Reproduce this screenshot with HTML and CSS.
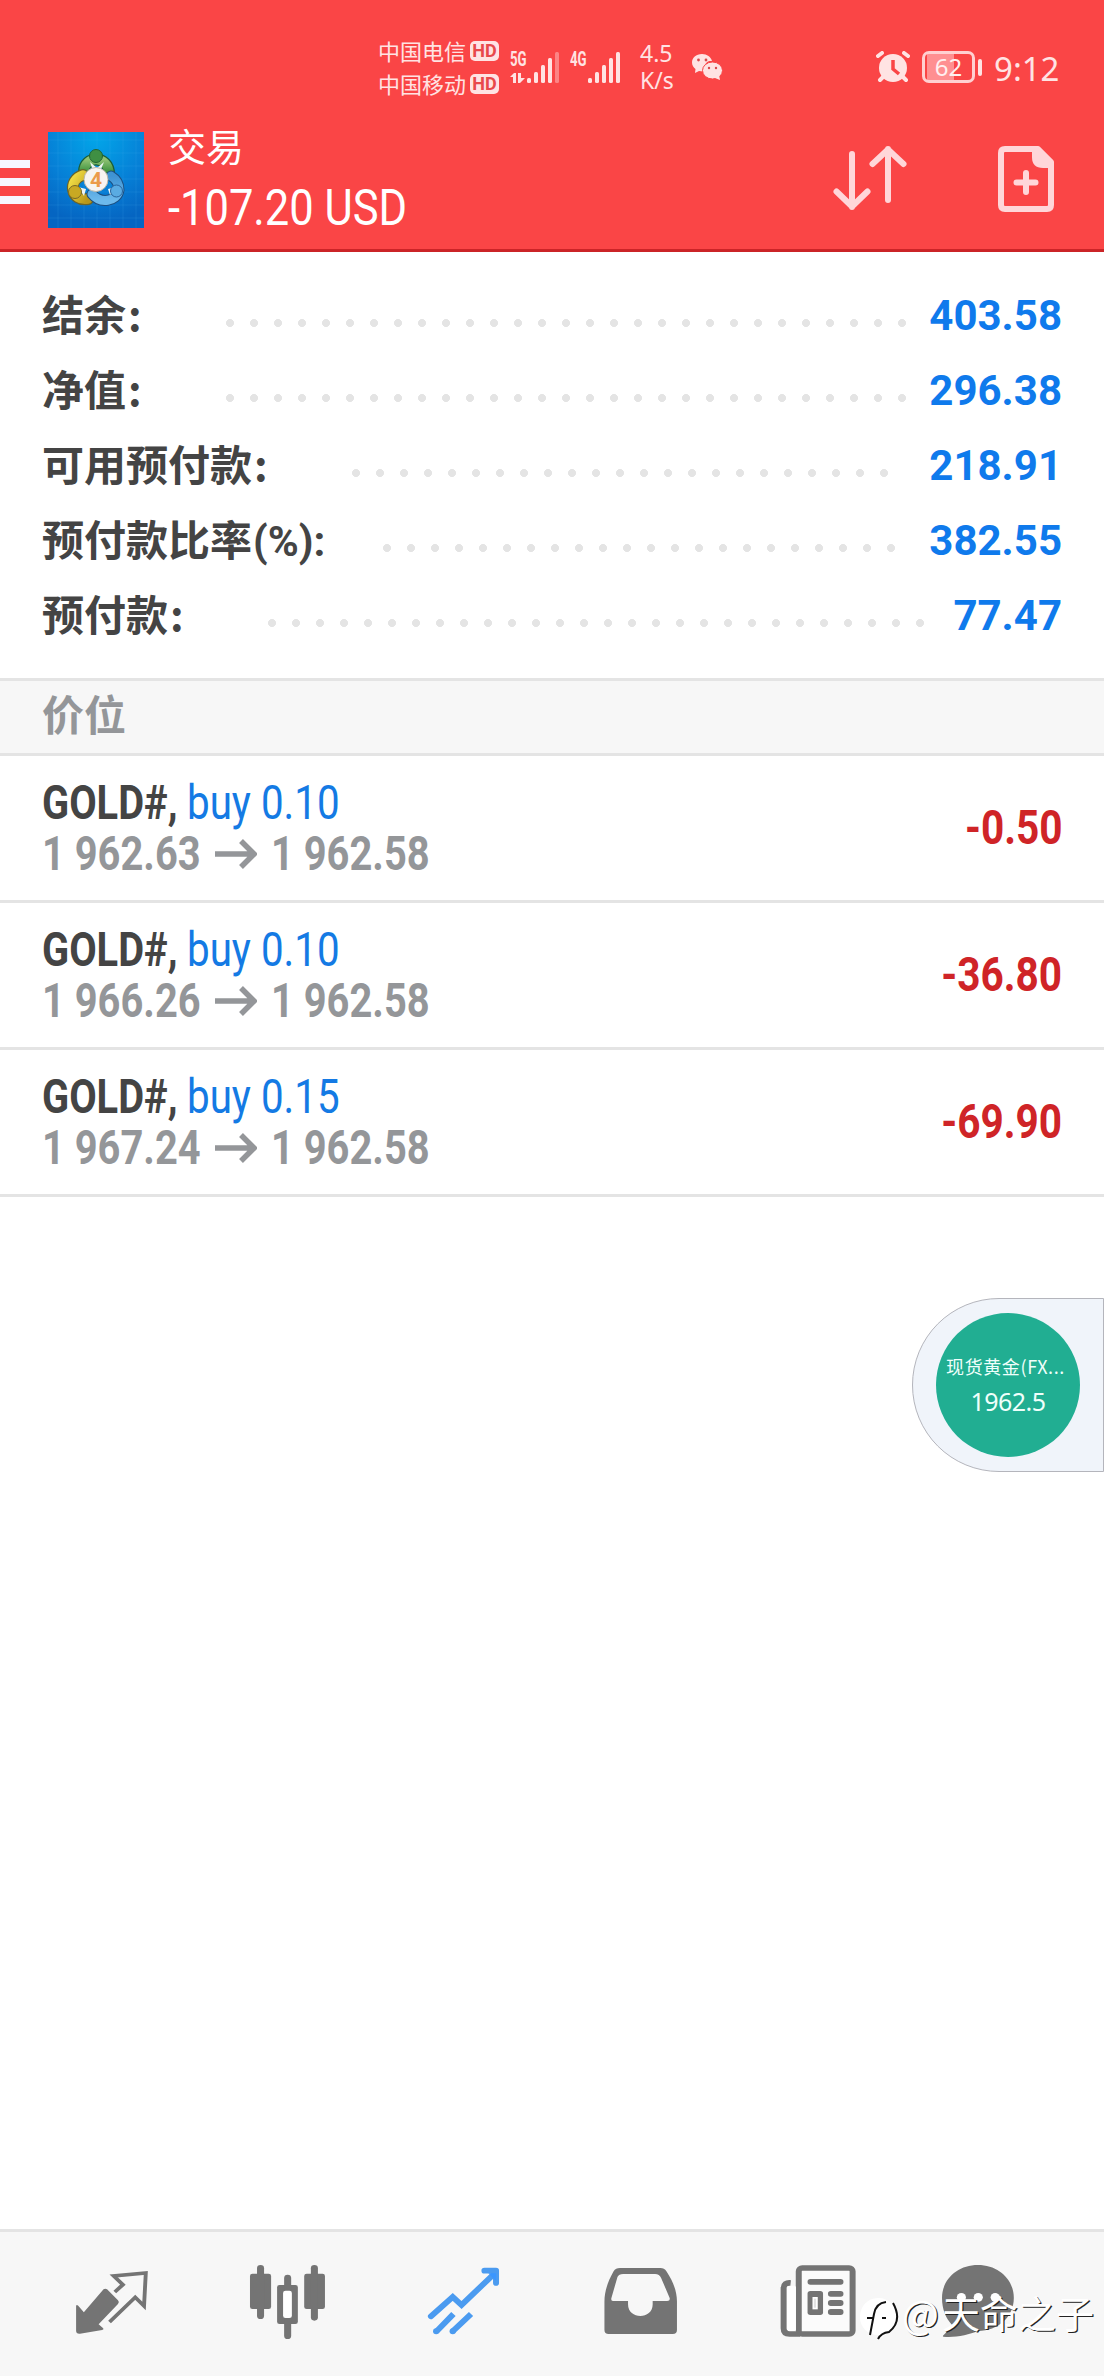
FILE: index.html
```html
<!DOCTYPE html>
<html lang="zh-CN">
<head>
<meta charset="utf-8">
<title>交易</title>
<link rel="stylesheet" href="styles.css">
</head>
<body>
<div class="screen">
  <header class="top">
    <div class="status">
      <div class="carriers">
        <div class="carrier">中国电信<b class="hd">HD</b></div>
        <div class="carrier">中国移动<b class="hd">HD</b></div>
      </div>
      <div class="signal s5">
        <span class="gen">5G</span>
        <svg width="52" height="34" viewBox="0 0 52 34"><g fill="#ffe3e3"><path d="M0 27l4-4h2v10H3v-6zM8 23h3v5h4l-5 5H8z"/><rect x="17" y="28" width="4" height="5" rx="1.5"/><rect x="24" y="22" width="4" height="11" rx="1.5"/><rect x="31" y="15" width="4" height="18" rx="1.5"/><rect x="38" y="8" width="4" height="25" rx="1.5"/><rect x="45" y="2" width="4" height="31" rx="1.5" opacity=".4"/></g></svg>
      </div>
      <div class="signal s4">
        <span class="gen">4G</span>
        <svg width="52" height="34" viewBox="0 0 52 34"><g fill="#ffe3e3"><rect x="17" y="28" width="4" height="5" rx="1.5"/><rect x="24" y="22" width="4" height="11" rx="1.5"/><rect x="31" y="15" width="4" height="18" rx="1.5"/><rect x="38" y="8" width="4" height="25" rx="1.5"/><rect x="45" y="2" width="4" height="31" rx="1.5"/></g></svg>
      </div>
      <div class="speed"><span>4.5</span><span>K/s</span></div>
      <svg class="wechat" width="32" height="28" viewBox="0 0 32 28"><path d="M11 1C5 1 1 5 1 9.500c0 3 1.500 5 3.500 6.500L4 20l4-2 4 .5C14 6 20 8 21 8 20 4 16 1 11 1z" fill="#ffe3e3"/><ellipse cx="21.500" cy="17.500" rx="10" ry="8.500" fill="#ffe3e3" stroke="#fa4546" stroke-width="1"/><path d="M24 25l5 2-1-5z" fill="#ffe3e3"/><g fill="#d9484b"><circle cx="7.500" cy="7" r="1.400"/><circle cx="15" cy="7" r="1.400"/><circle cx="18" cy="15" r="1.200"/><circle cx="25" cy="15" r="1.200"/></g></svg>
      <svg class="alarm" width="34" height="32" viewBox="0 0 34 32"><circle cx="17" cy="17" r="14" fill="#ffe3e3"/><path d="M2 5l4-3M28 2l4 3M7 26l-3 3M27 26l3 3" stroke="#ffe3e3" stroke-width="4" stroke-linecap="round"/><path d="M17 9v9l6 5" fill="none" stroke="#fa4546" stroke-width="3.500"/></svg>
      <div class="battery"><span>62</span></div>
      <i class="battery-cap"></i>
      <span class="clock">9:12</span>
    </div>
    <div class="appbar">
      <div class="menu"><i></i><i></i><i></i></div>
      <svg class="logo" width="96" height="96" viewBox="0 0 96 96">
        <defs>
          <radialGradient id="sky" cx=".5" cy=".05" r=".9"><stop offset="0" stop-color="#02a6e9"/><stop offset=".6" stop-color="#067fd6"/><stop offset="1" stop-color="#0565c2"/></radialGradient>
          <linearGradient id="green" x2="0" y2="1"><stop offset="0" stop-color="#8fc273"/><stop offset="1" stop-color="#2f8a35"/></linearGradient>
          <linearGradient id="gold" x2="1" y2="1"><stop offset="0" stop-color="#f1dd45"/><stop offset="1" stop-color="#b8961a"/></linearGradient>
          <linearGradient id="blue" x2="0" y2="1"><stop offset="0" stop-color="#3f93d3"/><stop offset="1" stop-color="#6cb9ec"/></linearGradient>
        </defs>
        <rect width="96" height="96" fill="url(#sky)"/>
        <path d="M10 0v96M23 0v96M36 0v96M49 0v96M62 0v96M75 0v96M88 0v96M0 8h96M0 21h96M0 34h96M0 47h96M0 60h96M0 73h96M0 86h96" stroke="#4db1ee" stroke-opacity=".16"/>
        <g fill="none" stroke-linecap="round">
          <path d="M36 40c0-17 25-17 25 2" stroke="#1d5e35" stroke-width="12"/><path d="M36 40c0-17 25-17 25 2" stroke="url(#green)" stroke-width="9.500"/>
          <path d="M35 43c-16 5-12 27 5 24" stroke="#6b6428" stroke-width="12"/><path d="M35 43c-16 5-12 27 5 24" stroke="url(#gold)" stroke-width="9.500"/>
          <path d="M44 62c8 10 25 8 27-4c0-7-3-11-8-14" stroke="#1d4f80" stroke-width="11"/><path d="M44 62c8 10 25 8 27-4c0-7-3-11-8-14" stroke="url(#blue)" stroke-width="9"/>
        </g>
        <path d="M42 30l7 6 7-6-5 12h-5zM30 55l8 2-2 7zM68 55l-8 2 2 6z" fill="#eef5f3"/>
        <circle cx="48" cy="24" r="6.500" fill="#3f8f43" stroke="#226431"/><circle cx="27" cy="60" r="6.500" fill="#c9a923" stroke="#796827"/><circle cx="68.500" cy="59" r="6" fill="#5aabe2" stroke="#28629b"/>
        <circle cx="48" cy="47.500" r="12" fill="#f7f4f1" stroke="#b9b5a8"/>
        <text x="48" y="55" text-anchor="middle" class="logo-num">4</text>
      </svg>
      <div class="titles">
        <div class="title">交易</div>
        <div class="profit">-107.20 USD</div>
      </div>
      <svg class="sort" width="76" height="68" viewBox="0 0 76 68" fill="none" stroke="#ffd6d9" stroke-width="6" stroke-linecap="round" stroke-linejoin="round"><path d="M20 9v53M4.500 46.500L20 61.500l15.500-15M56 55V4M40.500 19L56 4.500 71.500 19"/></svg>
      <svg class="add" width="56" height="68" viewBox="0 0 56 68"><path d="M7 4h33l13 13v43q0 4-4 4H7q-4 0-4-4V8q0-4 4-4z" fill="none" stroke="#ffd6d9" stroke-width="6" stroke-linejoin="round"/><path d="M34 3v9q0 11 11 11h9V17L40 3z" fill="#ffd6d9"/><path d="M28 28v19M18.500 37.500h19" stroke="#ffd6d9" stroke-width="6" stroke-linecap="round"/></svg>
    </div>
  </header>

  <section class="summary">
    <div class="line"><span class="label">结余<span class="colon">:</span></span><i class="dots d1"></i><b class="value">403.58</b></div>
    <div class="line"><span class="label">净值<span class="colon">:</span></span><i class="dots d1"></i><b class="value">296.38</b></div>
    <div class="line"><span class="label">可用预付款<span class="colon">:</span></span><i class="dots d3"></i><b class="value">218.91</b></div>
    <div class="line"><span class="label">预付款比率<span class="latin">(%):</span></span><i class="dots d4"></i><b class="value">382.55</b></div>
    <div class="line"><span class="label">预付款<span class="colon">:</span></span><i class="dots d5"></i><b class="value">77.47</b></div>
  </section>

  <div class="section-head">价位</div>
  <main class="positions">
    <div class="position">
      <div class="info">
        <div class="name"><b class="sym">GOLD#,</b><span class="side">buy 0.10</span></div>
        <div class="prices"><b class="px">1 962.63</b><svg class="arrow" width="42" height="30" viewBox="0 0 42 30"><path d="M0 15h38M26 2l13 13-13 13" fill="none" stroke="#949699" stroke-width="5.500"/></svg><b class="px">1 962.58</b></div>
      </div>
      <b class="pl">-0.50</b>
    </div>
    <div class="position">
      <div class="info">
        <div class="name"><b class="sym">GOLD#,</b><span class="side">buy 0.10</span></div>
        <div class="prices"><b class="px">1 966.26</b><svg class="arrow" width="42" height="30" viewBox="0 0 42 30"><path d="M0 15h38M26 2l13 13-13 13" fill="none" stroke="#949699" stroke-width="5.500"/></svg><b class="px">1 962.58</b></div>
      </div>
      <b class="pl">-36.80</b>
    </div>
    <div class="position">
      <div class="info">
        <div class="name"><b class="sym">GOLD#,</b><span class="side">buy 0.15</span></div>
        <div class="prices"><b class="px">1 967.24</b><svg class="arrow" width="42" height="30" viewBox="0 0 42 30"><path d="M0 15h38M26 2l13 13-13 13" fill="none" stroke="#949699" stroke-width="5.500"/></svg><b class="px">1 962.58</b></div>
      </div>
      <b class="pl">-69.90</b>
    </div>
  </main>

  <aside class="floater"><div class="quote"><span class="q-name">现货黄金(FX...</span><span class="q-price">1962.5</span></div></aside>

  <nav class="tabs">
    <svg viewBox="68 66 500 432" preserveAspectRatio="none"><path d="M294 238q5-4 10 0l31 33q5 5 0 11l-55 61 13 12q3 4-3 5l-63 11q-11 1-11-9v-74q1-6 6-1l16 20z" fill="#747474"/><path d="M326 246l23-22-26-26 91-9-5 99-25-26-73 74" fill="none" stroke="#747474" stroke-width="11"/></svg>
    <svg viewBox="568 66 500 432" preserveAspectRatio="none"><g fill="#747474"><rect x="710" y="191" width="60" height="106" rx="7"/><rect x="864" y="191" width="59" height="106" rx="7"/><rect x="730" y="165" width="20" height="162" rx="10"/><rect x="883" y="165" width="20" height="167" rx="10"/><rect x="787" y="225" width="59" height="117" rx="7"/><rect x="807" y="194" width="20" height="193" rx="10"/></g><rect x="804" y="242" width="25" height="82" rx="7" fill="#fff"/></svg>
    <svg viewBox="1068 66 500 432" preserveAspectRatio="none"><g fill="none" stroke="#4b9bf0" stroke-width="17"><path d="M1224 319l62-58 25 24 96-97" stroke-linecap="round"/><path d="M1376 182h33v37" stroke-linecap="round" stroke-linejoin="round"/><path d="M1240 364l48-52M1286 364l52-52"/></g><path d="M1387 190h22v22z" fill="#3b96ff"/><g fill="#4b9bf0"><circle cx="1239" cy="364" r="9"/><circle cx="1286" cy="364" r="9"/></g></svg>
    <svg viewBox="0 66 500 432" preserveAspectRatio="none"><path fill-rule="evenodd" d="M193 174h115q11 0 17 10c19 30 30 60 30 90v86q0 12-12 12H161q-12 0-12-12v-86c0-30 10-60 26-90q6-10 18-10zm9 18q-12 0-16 9l-17 62q-3 10 6 10h41v10c0 47 70 47 70 0v-10h41q10 0 7-10l-24-59q-5-12-17-12z" fill="#747474"/></svg>
    <svg viewBox="500 66 500 432" preserveAspectRatio="none"><rect x="701" y="174" width="153" height="198" rx="10" fill="#fbfbfb" stroke="#747474" stroke-width="17"/><rect x="666" y="227" width="27" height="136" rx="5" fill="#fff"/><path d="M678 219q-20-2-20 16v120q0 17 17 17h30" fill="none" stroke="#747474" stroke-width="17"/><g fill="#747474"><rect x="726" y="207" width="102" height="17" rx="8"/><rect x="784" y="243" width="44" height="17" rx="8"/><rect x="784" y="270" width="44" height="18" rx="8"/><rect x="784" y="297" width="44" height="18" rx="8"/><rect x="726" y="243" width="44" height="72" rx="8"/></g><rect x="740" y="261" width="15" height="37" fill="#fff"/><rect x="744" y="266" width="6" height="27" fill="#747474" opacity=".2"/></svg>
    <svg viewBox="1000 66 500 432" preserveAspectRatio="none"><path d="M1210 165c58 0 102 43 102 99s-44 99-102 99c-26 12-64 20-98 17-8-2 17-16 24-36-18-20-28-47-28-80 0-56 44-99 102-99z" fill="#747474"/><g fill="#fff"><circle cx="1163" cy="262" r="13"/><circle cx="1211" cy="262" r="13"/><circle cx="1259" cy="262" r="13"/></g></svg>
  </nav>
  <div class="watermark">
    <svg width="42" height="46" viewBox="0 0 42 46"><path d="M19 1c11 0 19 8 19 19S30 36 26 38l-6 5v-5C8 38 1 30 1 20S8 1 19 1z" fill="#fff"/><path d="M8 21h7M23 21h4M11 38l4-21q2-11 12-12M34 6q10 18-4 29-8 1-11 7" fill="none" stroke="#111" stroke-width="2"/></svg>
    <span class="at">@</span><span>天命之子</span>
  </div>
</div>
</body>
</html>
```
FILE: styles.css
```css
* { box-sizing: border-box; }
body { margin: 0; background: #fff; }
i { font-style: normal; display: block; }
svg { display: block; flex: none; }
.screen {
  position: relative;
  width: 1104px;
  height: 2376px;
  display: flex;
  flex-direction: column;
  font-family: Roboto, "Noto Sans CJK SC", sans-serif;
  color: #444;
  overflow: hidden;
  white-space: nowrap;
}

/* Header */
.top { height: 252px; background: #fa4546; border-bottom: 3px solid #cb2427; }
.status {
  height: 108px;
  padding: 35px 0 0 378px;
  display: flex;
  align-items: flex-start;
  color: #ffe3e3;
}
.carriers { width: 132px; margin-top: -1px; }
.carrier {
  display: flex;
  align-items: center;
  height: 33px;
  font: 22px/33px "Noto Sans CJK SC", sans-serif;
}
.hd {
  margin-left: 4px;
  width: 29px;
  height: 20px;
  border-radius: 5px;
  background: #ffe3e3;
  color: #e8494b;
  font: bold 18px/20px Roboto, sans-serif;
  text-align: center;
}
.signal { display: flex; flex-direction: column; height: 60px; width: 60px; position: relative; padding-top: 15px; }
.gen {
  position: absolute;
  left: 0;
  top: 15px;
  font: bold 20px/18px Roboto, sans-serif;
  transform: scaleX(.66);
  transform-origin: left;
}
.s4 svg { margin-left: 1px; }
.speed {
  width: 52px;
  margin-left: 10px;
  display: flex;
  flex-direction: column;
  font: 23px/27px "Noto Sans", sans-serif;
  padding-top: 5px;
}
.wechat { margin: 18px 0 0 -1px; }
.alarm { margin: 16px 0 0 153px; }
.battery {
  margin: 16px 0 0 12px;
  width: 53px;
  height: 32px;
  border: 3px solid #ffd0d1;
  border-radius: 7px;
  font: 24px/26px "Noto Sans", sans-serif;
  color: #fff0f0;
  text-align: center;
  background: linear-gradient(90deg, transparent 2px, #ff8f91 2px, #ff8f91 29px, transparent 29px);
}
.battery-cap { width: 4px; height: 17px; border-radius: 2px; background: #ffe3e3; margin: 24px 0 0 3px; }
.clock { margin: 14px 0 0 12px; font: 33px/40px "Noto Sans", sans-serif; }

.appbar { display: flex; height: 141px; }
.menu { width: 30px; padding-top: 52px; display: flex; flex-direction: column; gap: 10px; }
.menu i { height: 8px; background: #f7f7ff; }
.logo { margin: 24px 0 0 18px; }
.logo-num { font: bold 21px Roboto, sans-serif; fill: #eb9b4a; }
.titles { margin-left: 24px; width: 664px; color: #fff; }
.title { font: 38px/44px "Noto Sans CJK SC", sans-serif; padding-top: 15px; height: 75px; }
.profit { font-size: 50px; line-height: 50px; transform: scaleX(.87); transform-origin: left; width: 300px; }
.sort { margin-top: 37px; }
.add { margin: 37px 0 0 90px; }

/* Account summary */
.summary { height: 426px; padding: 27px 42px 0; }
.line { display: flex; height: 75px; align-items: center; }
.label { font: bold 42px/60px "Noto Sans CJK SC", sans-serif; width: 176px; height: 60px; margin-top: -7px; }
.latin { font-family: Roboto, sans-serif; line-height: 42px; margin-left: 1px; }
.colon { margin-left: 2px; }
.dots { height: 10px; margin-top: 13px; background: radial-gradient(circle, #e4e4e4 3.700px, transparent 4.300px) 0 0 / 24px 10px; }
.d1 { width: 696px; }
.d3 { width: 552px; margin-left: 126px; }
.d4 { width: 528px; margin-left: 157px; }
.d5 { width: 672px; margin-left: 42px; }
.value { margin: -2px 0 0 auto; font-size: 42px; color: #0f7aec; }

/* Positions */
.section-head {
  height: 78px;
  border-top: 3px solid #e4e4e4;
  border-bottom: 3px solid #e4e4e4;
  background: #f7f7f7;
  padding-left: 42px;
  font: bold 42px/63px "Noto Sans CJK SC", sans-serif;
  color: #949699;
}
.position { height: 147px; border-bottom: 3px solid #e4e4e4; padding: 21px 42px 0; display: flex; justify-content: space-between; }
.name, .prices { display: flex; height: 51px; font-size: 48px; line-height: 51px; }
.prices { color: #949699; }
.sym, .side, .px { transform-origin: left; }
.sym { width: 145px; transform: scaleX(.83); }
.side { color: #147ae4; transform: scaleX(.84); }
.px { width: 173px; transform: scaleX(.83); }
.arrow { margin: 11px 14px 0 0; }
.pl { color: #cf2427; font-size: 48px; line-height: 102px; transform: scaleX(.845); transform-origin: right; }

/* Floating quote */
.floater {
  position: absolute;
  left: 912px;
  top: 1298px;
  width: 192px;
  height: 174px;
  border: 1px solid #b4b5bc;
  border-radius: 87px 0 0 87px;
  background: #f0f4fa;
  padding: 14px 0 0 23px;
}
.quote {
  width: 144px;
  height: 144px;
  border-radius: 50%;
  background: #21ae92;
  color: #effffb;
  display: flex;
  flex-direction: column;
  align-items: center;
}
.q-name { font: 18px/26px "Noto Sans CJK SC", sans-serif; letter-spacing: .6px; margin: 40px 0 0 -5px; }
.q-price { font: 25px/30px "Noto Sans", sans-serif; letter-spacing: -.5px; margin-top: 7px; }

/* Tab bar */
.tabs {
  margin-top: auto;
  height: 147px;
  border-top: 3px solid #e4e4e4;
  background: #f7f7f7;
  padding-left: 24px;
  display: flex;
}
.tabs svg { width: 176px; height: 144px; }
.watermark {
  position: absolute;
  left: 859px;
  top: 2281px;
  display: flex;
  align-items: center;
  color: #fff;
  font: 38px/56px "Noto Sans CJK SC", sans-serif;
  text-shadow: 1.300px 1.300px 0 #222;
}
.watermark svg { margin: 16px 1px 0 0; }
.at { width: 40px; font-size: 39px; }
```
